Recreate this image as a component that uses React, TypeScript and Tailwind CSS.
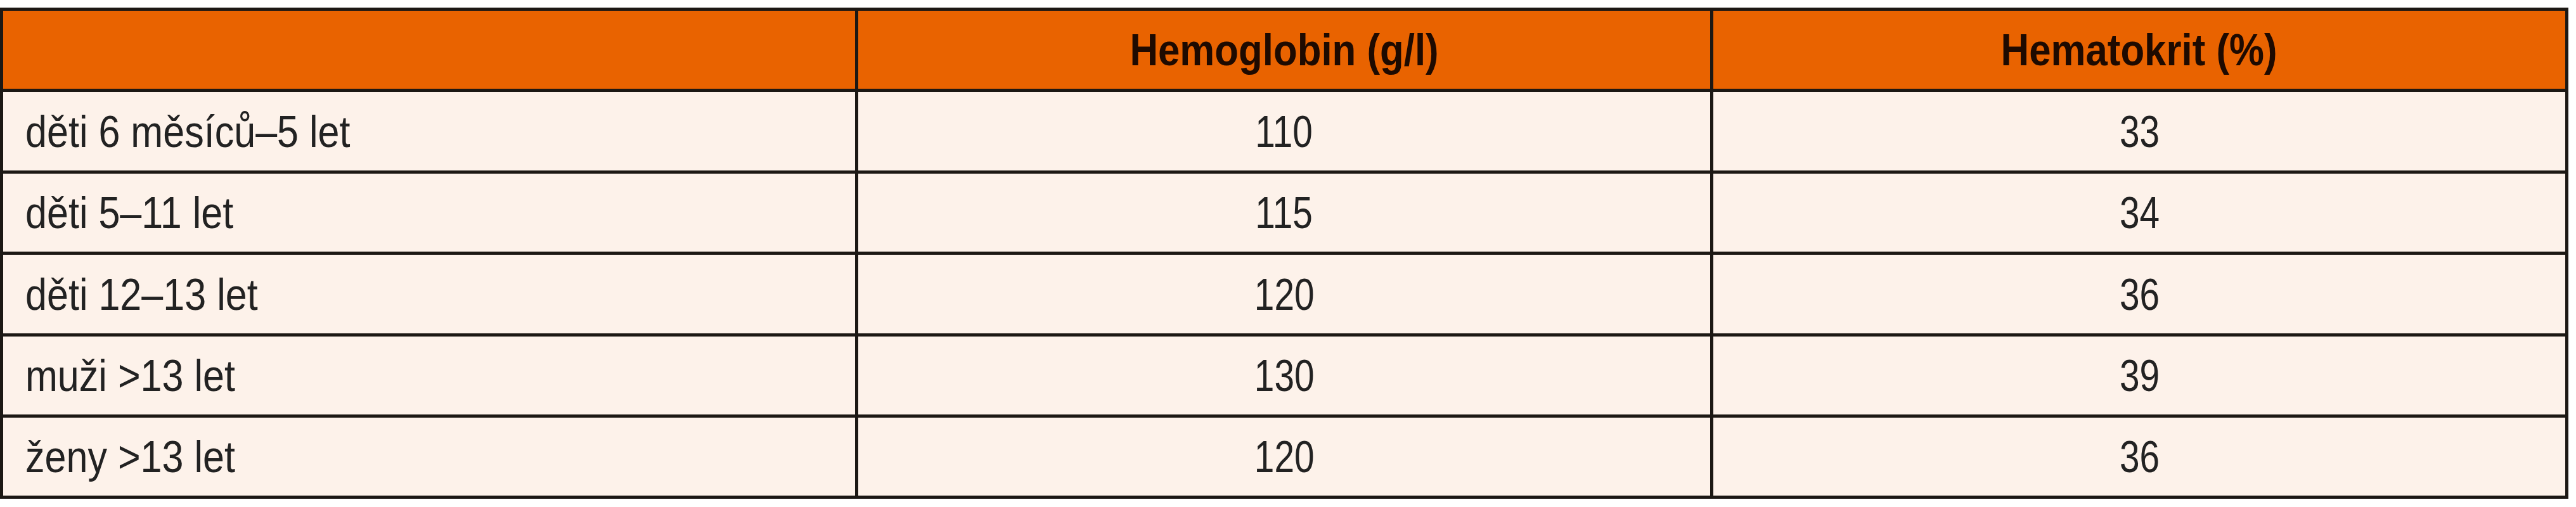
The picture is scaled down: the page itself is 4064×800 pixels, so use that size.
const rows = [
  { label: 'děti 6 měsíců–5 let', hb: '110', ht: '33' },
  { label: 'děti 5–11 let', hb: '115', ht: '34' },
  { label: 'děti 12–13 let', hb: '120', ht: '36' },
  { label: 'muži >13 let', hb: '130', ht: '39' },
  { label: 'ženy >13 let', hb: '120', ht: '36' },
];

// výšky řádků podle předlohy
const rowH = ['h-[124px]', 'h-[123px]', 'h-[124px]', 'h-[123px]', 'h-[123px]'];

const squeeze = {
  head: 'scale-x-[0.87] origin-center',
  label: 'scale-x-[0.86] origin-left',
  num: 'scale-x-[0.8] origin-center',
};

// písmo v předloze je úzké (condensed) – stáhneme ho do šířky
function Narrow({ children, kind }: { children: React.ReactNode; kind: keyof typeof squeeze }) {
  return <span className={`inline-block whitespace-nowrap ${squeeze[kind]}`}>{children}</span>;
}

export default function App() {
  return (
    <div className="min-h-screen bg-white pt-[12px] font-['Liberation_Sans',Arial,sans-serif]">
      <table className="w-[4052px] table-fixed border-separate border-spacing-[5px] bg-[#1c1814]">
        <colgroup>
          <col className="w-[1344px]" />
          <col className="w-[1344px]" />
          <col className="w-[1344px]" />
        </colgroup>
        <thead>
          <tr className="h-[123px] bg-[#e96300]">
            <th className="p-0" />
            <th className="p-0 text-center align-middle text-[71px] font-bold leading-none text-[#1e0a00]">
              <Narrow kind="head">Hemoglobin (g/l)</Narrow>
            </th>
            <th className="p-0 text-center align-middle text-[71px] font-bold leading-none text-[#1e0a00]">
              <Narrow kind="head">Hematokrit (%)</Narrow>
            </th>
          </tr>
        </thead>
        <tbody>
          {rows.map((r, i) => (
            <tr key={r.label} className={`${rowH[i]} bg-[#fdf2ea]`}>
              <td className="py-0 pl-[35px] pr-0 text-left align-middle text-[71px] leading-none text-[#222]">
                <Narrow kind="label">{r.label}</Narrow>
              </td>
              <td className="p-0 text-center align-middle text-[71px] leading-none text-[#222]">
                <Narrow kind="num">{r.hb}</Narrow>
              </td>
              <td className="p-0 text-center align-middle text-[71px] leading-none text-[#222]">
                <Narrow kind="num">{r.ht}</Narrow>
              </td>
            </tr>
          ))}
        </tbody>
      </table>
    </div>
  );
}
